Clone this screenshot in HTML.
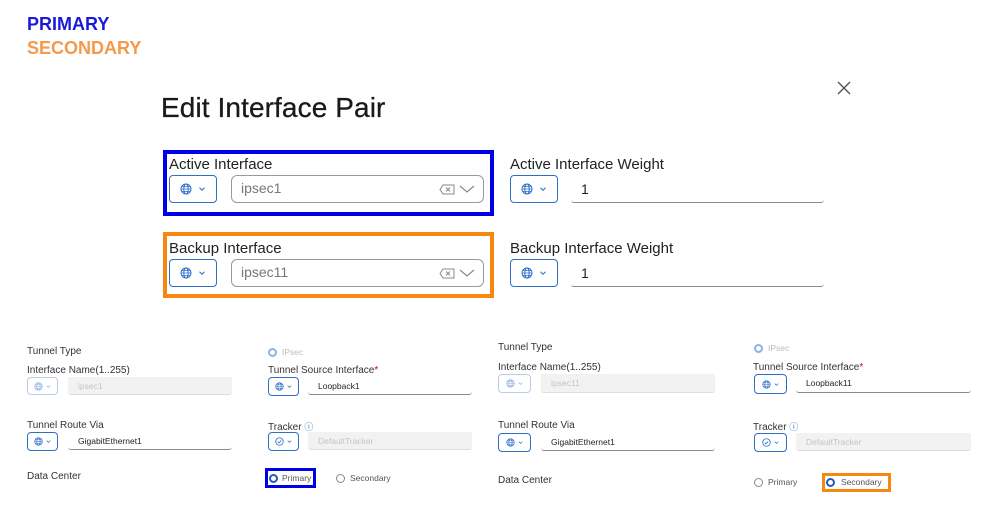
<!DOCTYPE html>
<html><head><meta charset="utf-8"><style>
*{margin:0;padding:0;box-sizing:border-box}
body{width:999px;height:516px;background:#fff;position:relative;overflow:hidden;font-family:"Liberation Sans",sans-serif;color:#222}
.a{position:absolute;white-space:nowrap}
.btn{position:absolute;border:1.5px solid #2f6fc8;border-radius:4px;background:#fff;display:flex;align-items:center;justify-content:center;gap:5px}
.btn.dis{border-color:#b7cde9}
.inp{position:absolute;border-bottom:1.5px solid #8a8a8a;border-radius:0 0 3px 3px;display:flex;align-items:center;padding-left:10px;color:#222}
.inp.dis{background:#f2f2f2;border-bottom:1px solid #ddd;color:#c4c4c4}
.lb{position:absolute;font-size:10px;color:#333;white-space:nowrap}
.sm{font-size:8.5px}
.radio{position:absolute;width:9px;height:9px;border-radius:50%;border:1px solid #888;background:#fff}
.radio.on{border:2.5px solid #1f5cb8;background:#fff}
.radio.dis{border:2.5px solid #8fb2e0}
</style></head><body>
<svg width="0" height="0" style="position:absolute"><defs>
<symbol id="g" viewBox="0 0 12 12"><circle cx="6" cy="6" r="5" fill="none" stroke="currentColor" stroke-width="1"/><ellipse cx="6" cy="6" rx="2.2" ry="5" fill="none" stroke="currentColor" stroke-width="1"/><path d="M1 6h10M2 3.5h8M2 8.5h8" stroke="currentColor" stroke-width=".8"/></symbol>
<symbol id="c" viewBox="0 0 12 12"><path d="M3 4.5l3 3 3-3" fill="none" stroke="currentColor" stroke-width="1.3"/></symbol>
<symbol id="t" viewBox="0 0 12 12"><circle cx="6" cy="6" r="5" fill="none" stroke="currentColor" stroke-width="1.1"/><path d="M3.7 6.2l1.6 1.6 3-3.2" fill="none" stroke="currentColor" stroke-width="1.1"/></symbol>
</defs></svg>

<div class="a" style="left:27px;top:14px;font-size:18px;font-weight:bold;color:#1a1ad6">PRIMARY</div>
<div class="a" style="left:27px;top:38px;font-size:18px;font-weight:bold;color:#f5994a">SECONDARY</div>
<div class="a" style="left:161px;top:92px;font-size:28px;color:#1a1a1a;letter-spacing:0.1px;-webkit-text-stroke:0.3px #1a1a1a">Edit Interface Pair</div>
<svg class="a" style="left:836px;top:80px" width="16" height="16"><path d="M2 2l12 12M14 2L2 14" stroke="#555" stroke-width="1.4"/></svg>

<!-- active box -->
<div class="a" style="left:163px;top:150px;width:331px;height:66px;border:4px solid #0000e6"></div>
<div class="a" style="left:169px;top:156px;font-size:15px">Active Interface</div>
<div class="btn" style="left:169px;top:175px;width:48px;height:28px;color:#2f6fc8"><svg width="12" height="12"><use href="#g"/></svg><svg width="10" height="10"><use href="#c"/></svg></div>
<div class="a" style="left:231px;top:175px;width:253px;height:28px;border:1.5px solid #9a9a9a;border-radius:6px;padding-left:9px;line-height:25px;font-size:14px;color:#777">ipsec1</div>
<svg class="a" style="left:439px;top:184px" width="16" height="11"><path d="M4 1h11v9H4L1 5.5z" fill="none" stroke="#888" stroke-width="1"/><path d="M7 3.5l4 4M11 3.5l-4 4" stroke="#888" stroke-width="1"/></svg>
<svg class="a" style="left:459px;top:183px" width="16" height="12"><path d="M1 3l7 6 7-6" fill="none" stroke="#888" stroke-width="1.2"/></svg>

<div class="a" style="left:510px;top:156px;font-size:15px">Active Interface Weight</div>
<div class="btn" style="left:510px;top:175px;width:48px;height:28px;color:#2f6fc8"><svg width="12" height="12"><use href="#g"/></svg><svg width="10" height="10"><use href="#c"/></svg></div>
<div class="inp" style="left:571px;top:175px;width:253px;height:28px;font-size:14px">1</div>

<!-- backup box -->
<div class="a" style="left:163px;top:232px;width:331px;height:66px;border:4px solid #f7870f"></div>
<div class="a" style="left:169px;top:240px;font-size:15px">Backup Interface</div>
<div class="btn" style="left:169px;top:259px;width:48px;height:28px;color:#2f6fc8"><svg width="12" height="12"><use href="#g"/></svg><svg width="10" height="10"><use href="#c"/></svg></div>
<div class="a" style="left:231px;top:259px;width:253px;height:28px;border:1.5px solid #9a9a9a;border-radius:6px;padding-left:9px;line-height:25px;font-size:14px;color:#777">ipsec11</div>
<svg class="a" style="left:439px;top:268px" width="16" height="11"><path d="M4 1h11v9H4L1 5.5z" fill="none" stroke="#888" stroke-width="1"/><path d="M7 3.5l4 4M11 3.5l-4 4" stroke="#888" stroke-width="1"/></svg>
<svg class="a" style="left:459px;top:267px" width="16" height="12"><path d="M1 3l7 6 7-6" fill="none" stroke="#888" stroke-width="1.2"/></svg>

<div class="a" style="left:510px;top:240px;font-size:15px">Backup Interface Weight</div>
<div class="btn" style="left:510px;top:259px;width:48px;height:28px;color:#2f6fc8"><svg width="12" height="12"><use href="#g"/></svg><svg width="10" height="10"><use href="#c"/></svg></div>
<div class="inp" style="left:571px;top:259px;width:253px;height:28px;font-size:14px">1</div>

<!-- bottom left -->
<div class="lb" style="left:27px;top:346px">Tunnel Type</div>
<div class="radio dis" style="left:268px;top:348px"></div><div class="lb sm" style="left:282px;top:347px;color:#bbb">IPsec</div>
<div class="lb" style="left:27px;top:365px">Interface Name(1..255)</div>
<div class="btn dis" style="left:27px;top:377px;width:31px;height:18px;color:#8fb2e0;gap:2px"><svg width="9" height="9"><use href="#g"/></svg><svg width="7" height="7"><use href="#c"/></svg></div>
<div class="inp dis sm" style="left:68px;top:377px;width:164px;height:18px">ipsec1</div>
<div class="lb" style="left:268px;top:365px">Tunnel Source Interface<span style="color:#d0021b">*</span></div>
<div class="btn" style="left:268px;top:377px;width:31px;height:19px;color:#2f6fc8;gap:2px"><svg width="9" height="9"><use href="#g"/></svg><svg width="7" height="7"><use href="#c"/></svg></div>
<div class="inp sm" style="left:308px;top:377px;width:164px;height:18px">Loopback1</div>

<div class="lb" style="left:27px;top:420px">Tunnel Route Via</div>
<div class="btn" style="left:27px;top:432px;width:31px;height:19px;color:#2f6fc8;gap:2px"><svg width="9" height="9"><use href="#g"/></svg><svg width="7" height="7"><use href="#c"/></svg></div>
<div class="inp sm" style="left:68px;top:432px;width:164px;height:18px">GigabitEthernet1</div>
<div class="lb" style="left:268px;top:420px">Tracker <span style="color:#2f6fc8;font-size:9px">ⓘ</span></div>
<div class="btn" style="left:268px;top:432px;width:31px;height:19px;color:#2f6fc8;gap:2px"><svg width="9" height="9"><use href="#t"/></svg><svg width="7" height="7"><use href="#c"/></svg></div>
<div class="inp dis sm" style="left:308px;top:432px;width:164px;height:18px">DefaultTracker</div>

<div class="lb" style="left:27px;top:471px">Data Center</div>
<div class="a" style="left:265px;top:468px;width:51px;height:20px;border:3px solid #0000e6"></div>
<div class="radio on" style="left:269px;top:474px"></div><div class="lb sm" style="left:282px;top:473px;color:#555">Primary</div>
<div class="radio" style="left:336px;top:474px"></div><div class="lb sm" style="left:350px;top:473px;color:#555">Secondary</div>

<!-- bottom right -->
<div class="lb" style="left:498px;top:342px">Tunnel Type</div>
<div class="radio dis" style="left:754px;top:344px"></div><div class="lb sm" style="left:768px;top:343px;color:#bbb">IPsec</div>
<div class="lb" style="left:498px;top:362px">Interface Name(1..255)</div>
<div class="btn dis" style="left:498px;top:374px;width:33px;height:19px;color:#8fb2e0;gap:2px"><svg width="9" height="9"><use href="#g"/></svg><svg width="7" height="7"><use href="#c"/></svg></div>
<div class="inp dis sm" style="left:541px;top:374px;width:174px;height:19px">ipsec11</div>
<div class="lb" style="left:753px;top:362px">Tunnel Source Interface<span style="color:#d0021b">*</span></div>
<div class="btn" style="left:754px;top:374px;width:33px;height:20px;color:#2f6fc8;gap:2px"><svg width="9" height="9"><use href="#g"/></svg><svg width="7" height="7"><use href="#c"/></svg></div>
<div class="inp sm" style="left:796px;top:374px;width:175px;height:19px">Loopback11</div>

<div class="lb" style="left:498px;top:420px">Tunnel Route Via</div>
<div class="btn" style="left:498px;top:433px;width:33px;height:19px;color:#2f6fc8;gap:2px"><svg width="9" height="9"><use href="#g"/></svg><svg width="7" height="7"><use href="#c"/></svg></div>
<div class="inp sm" style="left:541px;top:433px;width:174px;height:18px">GigabitEthernet1</div>
<div class="lb" style="left:753px;top:420px">Tracker <span style="color:#2f6fc8;font-size:9px">ⓘ</span></div>
<div class="btn" style="left:754px;top:433px;width:33px;height:19px;color:#2f6fc8;gap:2px"><svg width="9" height="9"><use href="#t"/></svg><svg width="7" height="7"><use href="#c"/></svg></div>
<div class="inp dis sm" style="left:796px;top:433px;width:175px;height:18px">DefaultTracker</div>

<div class="lb" style="left:498px;top:475px">Data Center</div>
<div class="radio" style="left:754px;top:478px"></div><div class="lb sm" style="left:768px;top:477px;color:#555">Primary</div>
<div class="a" style="left:822px;top:473px;width:69px;height:19px;border:3px solid #f7870f"></div>
<div class="radio on" style="left:826px;top:478px"></div><div class="lb sm" style="left:841px;top:477px;color:#555">Secondary</div>
</body></html>
